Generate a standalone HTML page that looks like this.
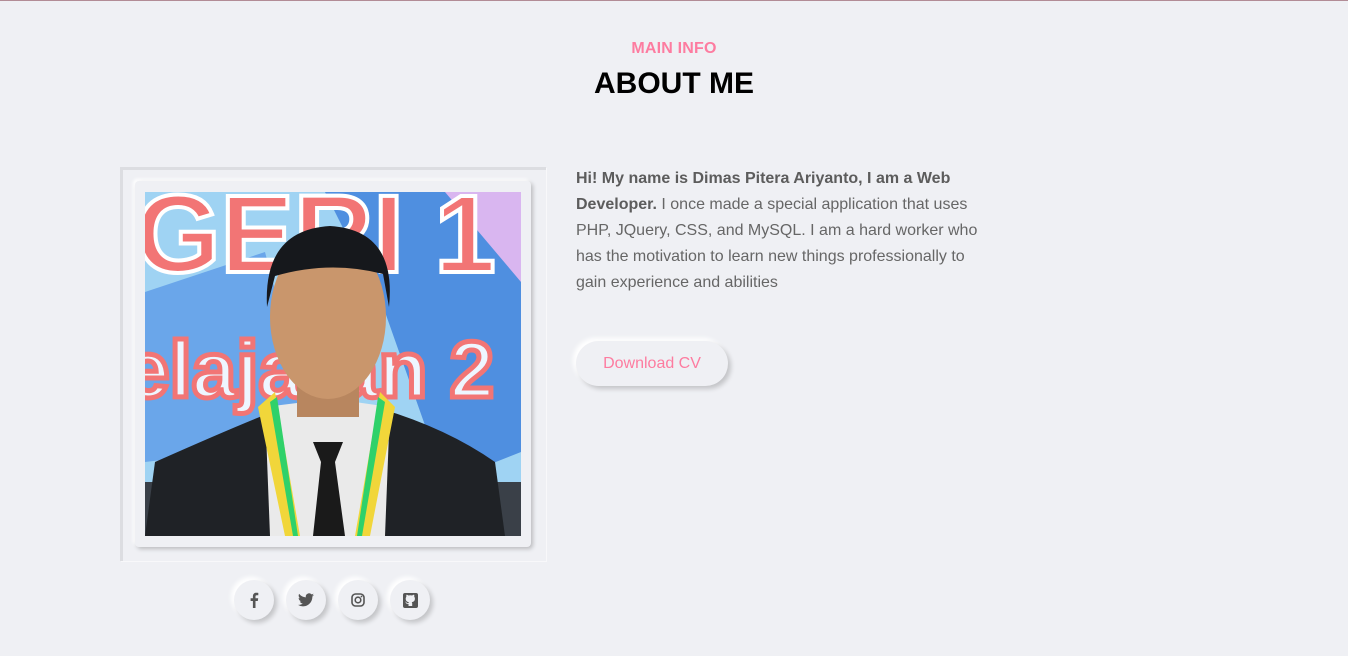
<!DOCTYPE html>
<html><head><meta charset="utf-8"><style>
*{margin:0;padding:0;box-sizing:border-box}
body{width:1348px;height:656px;background:#eff0f4;font-family:"Liberation Sans",sans-serif;position:relative;overflow:hidden}
.top{position:absolute;left:0;top:0;width:100%;height:1px;background:#b28c96}
.sub{position:absolute;top:40px;width:100%;text-align:center;color:#fd7ca0;font-size:16px;font-weight:bold;letter-spacing:0.2px}
h1{position:absolute;top:67px;width:100%;text-align:center;font-size:30px;font-weight:bold;color:#000}
.frame{position:absolute;left:120px;top:167px;width:426px;height:394px;background:#eff0f4;border-left:3px solid #dcdde1;border-top:3px solid #dcdde1;box-shadow:1px 1px 0 #f8f8fa}
.card{position:absolute;left:135px;top:181px;width:396px;height:366px;background:#eff0f4;border-radius:4px;box-shadow:2px 2px 4px rgba(0,0,0,.22),-2px -2px 3px #fff}
.photo{position:absolute;left:145px;top:192px;width:376px;height:344px;overflow:hidden}
.txt{position:absolute;left:576px;top:166px;width:420px;font-size:16px;line-height:26px;color:#666}
.txt b{color:#5c5c5c}
.btn{position:absolute;left:576px;top:341px;width:152px;height:45px;border-radius:23px;background:#eff0f4;box-shadow:3px 3px 5px rgba(0,0,0,.18),-3px -3px 5px #fff;color:#fd7ca0;font-size:16px;text-align:center;line-height:45px}
.s{position:absolute;top:580px;width:40px;height:40px;border-radius:50%;background:#eff0f4;box-shadow:3px 3px 5px rgba(0,0,0,.18),-3px -3px 5px #fff;display:flex;align-items:center;justify-content:center}
</style></head><body>
<div class="top"></div>
<div class="sub">MAIN INFO</div>
<h1>ABOUT ME</h1>
<div class="frame"></div>
<div class="card"></div>
<div class="photo">
<svg width="376" height="344" viewBox="0 0 376 344">
<rect width="376" height="344" fill="#9fd3f3"/>
<polygon points="180,0 376,0 376,260 300,290 240,120" fill="#4f8fe0"/>
<polygon points="0,100 120,60 170,250 0,270" fill="#6aa6ea"/>
<polygon points="300,0 376,0 376,90" fill="#d9b6f0"/>
<text x="-10" y="80" font-family="Liberation Sans" font-weight="bold" font-size="110" fill="#f27575" stroke="#fff" stroke-width="4">GERI 1</text>
<text x="-20" y="205" font-family="Liberation Sans" font-weight="bold" font-size="80" fill="#eef6ff" stroke="#f27575" stroke-width="5">elajaran 2</text>
<rect x="0" y="290" width="376" height="54" fill="#3a4048"/>
<path d="M0,344 L10,270 Q100,230 140,215 L230,215 Q300,235 350,270 L360,344Z" fill="#1f2226"/>
<path d="M120,215 L125,344 L240,344 L245,215 L210,210 L160,210Z" fill="#eaeaea"/>
<path d="M113,215 L140,344 L155,344 L130,200Z M250,215 L225,344 L210,344 L235,200Z" fill="#f1d63a"/>
<path d="M125,210 L148,344 L153,344 L132,205Z M240,210 L217,344 L212,344 L233,205Z" fill="#2fd16a"/>
<path d="M168,250 L198,250 L190,270 L200,344 L168,344 L176,270Z" fill="#1a1a1a"/>
<rect x="152" y="170" width="62" height="55" fill="#b8865f"/>
<ellipse cx="183" cy="125" rx="58" ry="82" fill="#c9966c"/>
<path d="M122,115 Q118,38 185,34 Q252,38 244,115 L238,82 Q185,68 130,84Z" fill="#16181c"/>
</svg>
</div>
<div class="txt"><b>Hi! My name is Dimas Pitera Ariyanto, I am a Web<br>Developer.</b> I once made a special application that uses<br>PHP, JQuery, CSS, and MySQL. I am a hard worker who<br>has the motivation to learn new things professionally to<br>gain experience and abilities</div>
<div class="btn">Download CV</div>
<div class="s" style="left:234px"><svg width="10" height="16" viewBox="0 0 10 16"><path d="M6.5 16V9h2.3l.4-2.7H6.5V4.6c0-.8.2-1.3 1.3-1.3H9.3V.9C9 .9 8.2.8 7.2.8 5.2.8 3.9 2 3.9 4.2v2.1H1.6V9h2.3v7z" fill="#555"/></svg></div>
<div class="s" style="left:286px"><svg width="16" height="14" viewBox="0 0 24 20"><path d="M24 2.4a10 10 0 0 1-2.8.8A5 5 0 0 0 23.3.4a10 10 0 0 1-3.1 1.2A4.9 4.9 0 0 0 11.8 6 14 14 0 0 1 1.7.9a4.9 4.9 0 0 0 1.5 6.6 4.9 4.9 0 0 1-2.2-.6 4.9 4.9 0 0 0 3.9 4.9 5 5 0 0 1-2.2.1 4.9 4.9 0 0 0 4.6 3.400A9.9 9.9 0 0 1 0 17.3 14 14 0 0 0 7.5 19.5c9 0 14-7.5 14-14v-.6A10 10 0 0 0 24 2.4z" fill="#555"/></svg></div>
<div class="s" style="left:338px"><svg width="14" height="14" viewBox="0 0 14 14"><rect x="1" y="1" width="12" height="12" rx="3.5" fill="none" stroke="#555" stroke-width="1.6"/><circle cx="7" cy="7" r="2.8" fill="none" stroke="#555" stroke-width="1.6"/><circle cx="10.5" cy="3.5" r=".9" fill="#555"/></svg></div>
<div class="s" style="left:390px"><svg width="15" height="15" viewBox="0 0 15 15"><rect width="15" height="15" rx="2" fill="#555"/><path d="M5.5 13v-2c-2 .4-2.3-.9-2.3-.9-.3-.7-.8-.9-.8-.9-.6-.4.1-.4.1-.4.7.1 1 .7 1 .7.6 1 1.6.7 2 .5 0-.4.2-.7.4-.9-1.600-.2-3.2-.8-3.2-3.5 0-.8.3-1.4.7-1.9-.1-.2-.3-.9.1-1.9 0 0 .6-.2 2 .7a6.8 6.8 0 0 1 3.6 0c1.4-.9 2-.7 2-.7.4 1 .2 1.7.1 1.9.5.5.7 1.1.7 1.9 0 2.7-1.6 3.3-3.2 3.5.3.2.5.7.5 1.3V13z" fill="#eff0f4"/></svg></div>
</body></html>
